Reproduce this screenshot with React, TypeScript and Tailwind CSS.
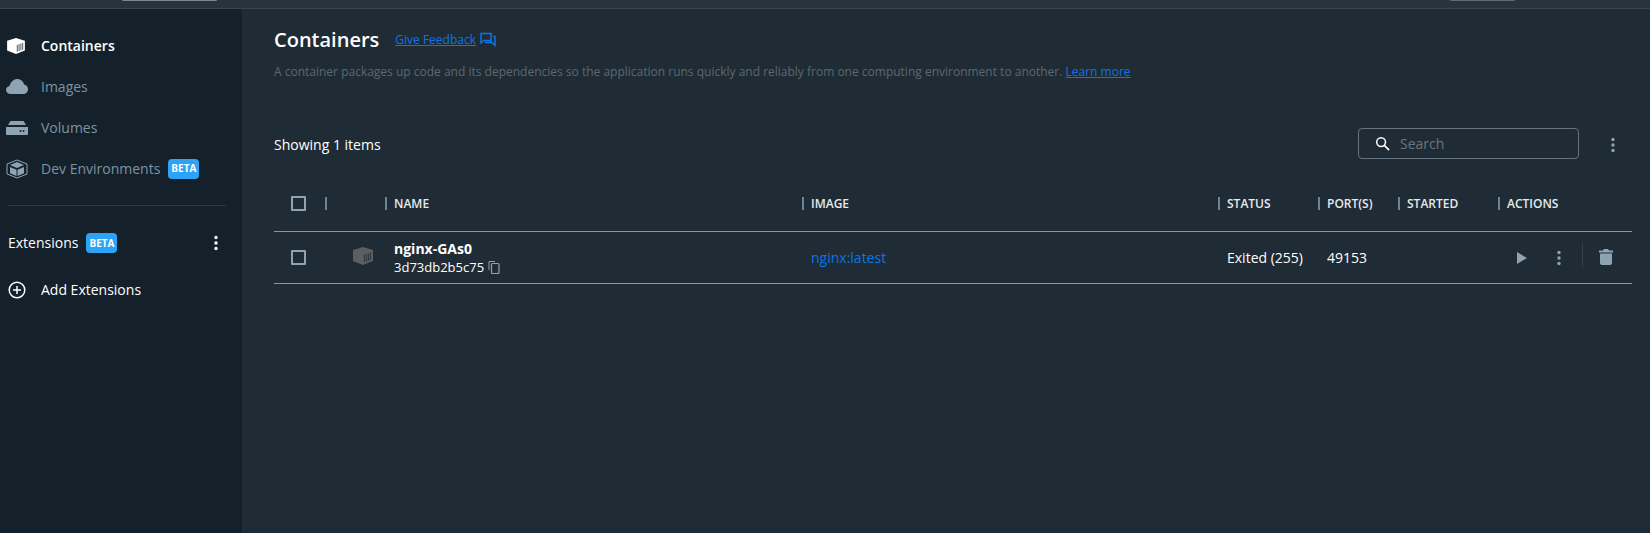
const columns = "grid grid-cols-[50px_60px_417px_416px_100px_80px_100px_135px]";

function ContainerIcon({ className, slats }: { className: string; slats: string }) {
  return (
    <svg viewBox="0 0 22 18" className={className}>
      <path d="M11 0 21 3v11l-10 4L1 14V3z" fill="currentColor" />
      <path d="M12.500 15.500V7.500M14.500 14.700V6.900M16.500 13.900V6.200M18.500 13.100V5.500" stroke={slats} strokeWidth="1.200" />
    </svg>
  );
}

function CloudIcon() {
  return (
    <svg viewBox="0 0 22 15" className="w-[22px] h-[15px] text-[#8fa4b3]">
      <path
        d="M4.500 15C2 15 0 13.200 0 11c0-2 1.500-3.600 3.600-3.900C4.600 3 7.600 0 11.200 0c3.400 0 6.200 2.400 6.900 5.600 2.200.3 3.900 2.200 3.900 4.600 0 2.700-2.100 4.800-4.800 4.800z"
        fill="currentColor"
      />
    </svg>
  );
}

function VolumeIcon() {
  return (
    <svg viewBox="0 0 22 14" className="w-[22px] h-[14px] text-[#8fa4b3]">
      <path d="M4.500 0h13L20 4H2z" fill="currentColor" />
      <path d="M0 6h22v7a1 1 0 0 1-1 1H1a1 1 0 0 1-1-1z" fill="currentColor" />
      <circle cx="14.500" cy="10" r="1" fill="#14212b" />
      <circle cx="17.500" cy="10" r="1" fill="#14212b" />
    </svg>
  );
}

function DevEnvIcon() {
  return (
    <svg viewBox="0 0 22 20" className="w-[22px] h-5 text-[#8fa4b3]">
      <path d="M11 1 21 5v10l-10 4L1 15V5z" fill="none" stroke="currentColor" strokeWidth="1" />
      <path d="M11 3 18 6l-7 3-7-3z" fill="currentColor" />
      <path d="M4 8l6.500 2.800V17L4 14.200zM18 8l-6.500 2.800V17l6.500-2.800z" fill="currentColor" />
    </svg>
  );
}

function Kebab({ className }: { className: string }) {
  return (
    <svg viewBox="0 0 4 16" className={`w-1 h-4 ${className}`}>
      <circle cx="2" cy="2.500" r="1.700" fill="currentColor" />
      <circle cx="2" cy="8" r="1.700" fill="currentColor" />
      <circle cx="2" cy="13.500" r="1.700" fill="currentColor" />
    </svg>
  );
}

function Beta() {
  return (
    <span className="rounded-[4px] bg-[#2da3f5] h-5 w-[31px] flex items-center justify-center text-[10px] font-bold text-white">
      BETA
    </span>
  );
}

function NavItem({ icon, label, active }: { icon: React.ReactNode; label: string; active?: boolean }) {
  return (
    <div className="h-[41px] flex items-center">
      <div className="w-[41px] pl-1.5 flex items-center">{icon}</div>
      <span className={active ? "text-sm font-semibold text-white" : "text-sm text-[#7d93a3]"}>{label}</span>
      {label === "Dev Environments" && (
        <span className="ml-2">
          <Beta />
        </span>
      )}
    </div>
  );
}

function HeaderCell({ label }: { label?: string }) {
  return (
    <div className="flex items-center gap-[7px] pl-px">
      <span className="w-0.5 h-[13px] bg-[#6b8496]" />
      {label && <span className="text-xs font-semibold text-[#e6eaed]">{label}</span>}
    </div>
  );
}

function Checkbox() {
  return <span className="block w-[15px] h-[15px] rounded-[1px] border-2 border-[#8fa4b3]" />;
}

export default function App() {
  return (
    <div className="w-[1650px] h-[533px] flex flex-col overflow-hidden bg-[#1f2c35] font-['Open_Sans',sans-serif]">
      {/* Top bar, cropped off in the screenshot */}
      <div className="relative h-[9px] bg-[#27343d] border-b border-[#38464f] shrink-0">
        <span className="absolute left-[122px] top-0 w-[95px] h-px bg-[#7b858c] rounded-b" />
        <span className="absolute left-[1450px] top-0 w-[65px] h-px bg-[#5f6b73] rounded-b" />
      </div>

      <div className="flex flex-1 min-h-0">
        {/* Sidebar */}
        <aside className="w-[242px] shrink-0 bg-[#14212b] pt-4">
          <NavItem
            active
            label="Containers"
            icon={<ContainerIcon className="w-[20px] h-4 text-white" slats="#5a6770" />}
          />
          <NavItem label="Images" icon={<CloudIcon />} />
          <NavItem label="Volumes" icon={<VolumeIcon />} />
          <NavItem label="Dev Environments" icon={<DevEnvIcon />} />

          <div className="mx-2 mt-4 w-[218px] h-px bg-[#2c3a44]" />

          <div className="mt-[27px] pl-2 w-[222px] flex items-center h-5">
            <span className="text-sm text-white">Extensions</span>
            <span className="ml-2">
              <Beta />
            </span>
            <Kebab className="ml-auto mr-1 text-white" />
          </div>

          <div className="mt-[27px] pl-2 h-5 flex items-center">
            <svg viewBox="0 0 18 18" className="w-[18px] h-[18px] text-white">
              <circle cx="9" cy="9" r="7.800" fill="none" stroke="currentColor" strokeWidth="1.500" />
              <path d="M9 5v8M5 9h8" stroke="currentColor" strokeWidth="1.500" />
            </svg>
            <span className="ml-[15px] text-sm text-white">Add Extensions</span>
          </div>
        </aside>

        {/* Main */}
        <main className="flex-1 pl-[32px] pr-[18px]">
          <div className="flex items-center pt-[17px] h-[45px]">
            <h1 className="text-xl font-semibold text-white leading-7">Containers</h1>
            <a className="ml-4 text-xs text-[#0a74e8] underline">Give Feedback</a>
            <svg viewBox="0 0 16 16" className="ml-1 w-4 h-4 text-[#0a74e8]">
              <path d="M1 1.500h10v7H4l-3 2.500zM5 10.500h7l3 3V4.500h-2" fill="none" stroke="currentColor" strokeWidth="1.500" />
            </svg>
          </div>
          <p className="mt-2.5 text-xs text-[#5d686f] leading-4">
            A container packages up code and its dependencies so the application runs quickly and reliably from one
            computing environment to another.{" "}
            <a className="text-[#0a74e8] underline">Learn more</a>
          </p>

          <div className="mt-[49px] flex items-center h-[31px]">
            <span className="text-sm text-white">Showing 1 items</span>
            <div className="ml-auto -mt-0.5 w-[221px] h-[31px] rounded border border-[#66747d] flex items-center pl-4">
              <svg viewBox="0 0 16 16" className="w-[15px] h-[15px] text-white">
                <circle cx="6.500" cy="6.500" r="4.700" fill="none" stroke="currentColor" strokeWidth="1.600" />
                <path d="M10 10l5 5" stroke="currentColor" strokeWidth="1.800" />
              </svg>
              <span className="ml-2.5 text-sm text-[#6b767d]">Search</span>
            </div>
            <Kebab className="ml-[32px] mr-[17px] text-[#8fa4b3]" />
          </div>

          {/* Table */}
          <div className="mt-4 w-[1358px]">
            <div className={`${columns} h-[56px] items-center border-b border-[#8099a9]`}>
              <div className="pl-[17px]">
                <Checkbox />
              </div>
              <HeaderCell />
              <HeaderCell label="NAME" />
              <HeaderCell label="IMAGE" />
              <HeaderCell label="STATUS" />
              <HeaderCell label="PORT(S)" />
              <HeaderCell label="STARTED" />
              <HeaderCell label="ACTIONS" />
            </div>

            <div className={`${columns} h-[52px] items-center border-b border-[#8099a9] text-sm text-white`}>
              <div className="pl-[17px]">
                <Checkbox />
              </div>
              <div className="pl-[28px] -mt-1">
                <ContainerIcon className="w-[22px] h-[18px] text-[#5e5e5e]" slats="#333a3f" />
              </div>
              <div className="pl-[10px]">
                <div className="font-bold leading-[19px]">nginx-GAs0</div>
                <div className="flex items-center gap-1 text-[13px] leading-[19px]">
                  3d73db2b5c75
                  <svg viewBox="0 0 12 14" className="w-3 h-3.5 text-[#8fa4b3]">
                    <path d="M1 10V1.500h6" fill="none" stroke="currentColor" strokeWidth="1" />
                    <rect x="3.500" y="3.500" width="7.500" height="10" rx="1" fill="none" stroke="currentColor" strokeWidth="1.200" />
                  </svg>
                </div>
              </div>
              <div className="pl-[10px] text-[#0a74e8]">nginx:latest</div>
              <div className="pl-[10px]">Exited (255)</div>
              <div className="pl-[10px]">49153</div>
              <div />
              <div className="flex items-center pl-5">
                <svg viewBox="0 0 10 12" className="w-2.5 h-3 text-[#8fa4b3]">
                  <path d="M0 0l10 6-10 6z" fill="currentColor" />
                </svg>
                <Kebab className="ml-[30px] text-[#8fa4b3]" />
                <span className="ml-[21px] w-px h-6 -mt-1.5 bg-[#33424c]" />
                <svg viewBox="0 0 14 16" className="ml-4 -mt-0.5 w-3.5 h-4 text-[#8fa4b3]">
                  <path d="M5 0h4l1 1.500h4v2H0v-2h4zM1 4.500h12V14a2 2 0 0 1-2 2H3a2 2 0 0 1-2-2z" fill="currentColor" />
                </svg>
              </div>
            </div>
          </div>
        </main>
      </div>
    </div>
  );
}
